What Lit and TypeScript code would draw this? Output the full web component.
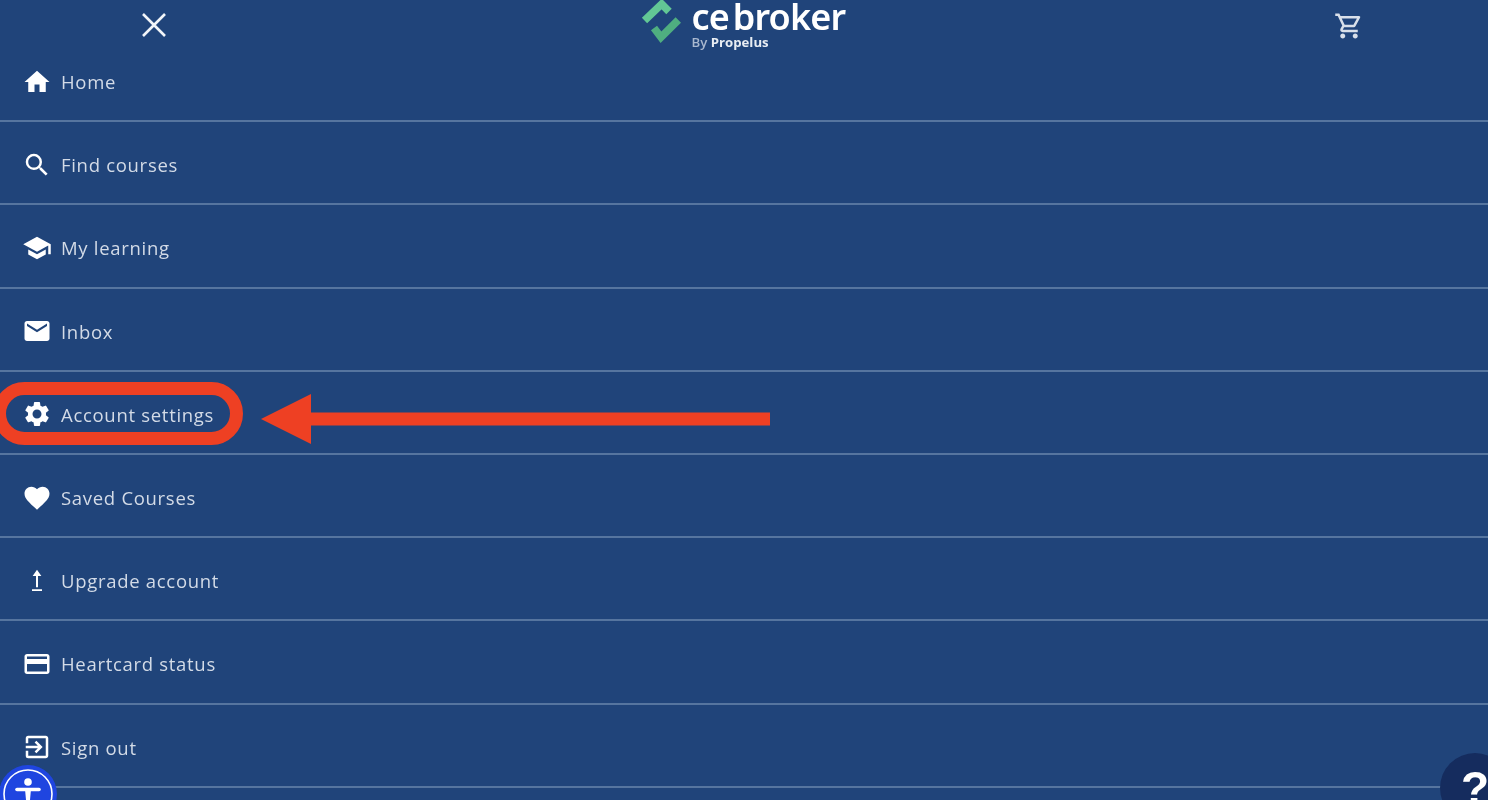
import { LitElement, html, css, svg } from "lit";
import { customElement } from "lit/decorators.js";

const items = [
  { label: "Home", icon: svg`<path d="M10 20v-6h4v6h5v-8h3L12 3 2 12h3v8z"/>` },
  { label: "Find courses", icon: svg`<path d="M15.5 14h-.79l-.28-.27A6.47 6.47 0 0 0 16 9.5 6.5 6.5 0 1 0 9.5 16c1.61 0 3.09-.59 4.23-1.57l.27.28v.79l5 4.99L20.49 19l-4.99-5zm-6 0C7.01 14 5 11.99 5 9.5S7.01 5 9.5 5 14 7.01 14 9.5 11.99 14 9.5 14z"/>` },
  { label: "My learning", icon: svg`<path d="M5 13.18v4L12 21l7-3.82v-4L12 17l-7-3.82zM12 3 1 9l11 6 9-4.91V17h2V9L12 3z"/>` },
  { label: "Inbox", icon: svg`<path d="M20 4H4c-1.1 0-1.99.9-1.99 2L2 18c0 1.1.9 2 2 2h16c1.1 0 2-.9 2-2V6c0-1.1-.9-2-2-2zm0 4-8 5-8-5V6l8 5 8-5v2z"/>` },
  { label: "Account settings", icon: svg`<path d="M19.14 12.94c.04-.3.06-.61.06-.94 0-.32-.02-.64-.07-.94l2.03-1.58a.49.49 0 0 0 .12-.61l-1.92-3.32a.488.488 0 0 0-.59-.22l-2.39.96c-.5-.38-1.03-.7-1.62-.94l-.36-2.54a.484.484 0 0 0-.48-.41h-3.84c-.24 0-.43.17-.47.41l-.36 2.54c-.59.24-1.13.57-1.62.94l-2.39-.96c-.22-.08-.47 0-.59.22L2.74 8.87c-.12.21-.08.47.12.61l2.03 1.58c-.05.3-.09.63-.09.94s.02.64.07.94l-2.03 1.58a.49.49 0 0 0-.12.61l1.92 3.32c.12.22.37.29.59.22l2.39-.96c.5.38 1.03.7 1.62.94l.36 2.54c.05.24.24.41.48.41h3.84c.24 0 .44-.17.47-.41l.36-2.54c.59-.24 1.13-.56 1.62-.94l2.39.96c.22.08.47 0 .59-.22l1.92-3.32c.12-.22.07-.47-.12-.61l-2.01-1.58zM12 15.6c-1.98 0-3.6-1.62-3.6-3.6s1.62-3.6 3.6-3.6 3.6 1.62 3.6 3.6-1.62 3.6-3.6 3.6z"/>` },
  { label: "Saved Courses", icon: svg`<path d="m12 21.35-1.45-1.32C5.4 15.36 2 12.28 2 8.5 2 5.42 4.42 3 7.5 3c1.74 0 3.41.81 4.5 2.09C13.09 3.81 14.76 3 16.5 3 19.58 3 22 5.42 22 8.5c0 3.78-3.4 6.86-8.55 11.54L12 21.35z"/>` },
  { label: "Upgrade account", icon: svg`<path d="M8 20h8v-1.5H8zM12 3 8.5 8h2.7v9h1.6V8h2.7z"/>` },
  { label: "Heartcard status", icon: svg`<path d="M20 4H4c-1.11 0-1.99.89-1.99 2L2 18c0 1.11.89 2 2 2h16c1.11 0 2-.89 2-2V6c0-1.11-.89-2-2-2zm0 14H4v-6h16v6zm0-10H4V6h16v2z"/>` },
  { label: "Sign out", icon: svg`<path d="M10.09 15.59 11.5 17l5-5-5-5-1.41 1.41L12.67 11H3v2h9.67l-2.58 2.59zM19 3H5a2 2 0 0 0-2 2v4h2V5h14v14H5v-4H3v4a2 2 0 0 0 2 2h14c1.1 0 2-.9 2-2V5c0-1.1-.9-2-2-2z"/>` },
];

@customElement("app-root")
export class AppRoot extends LitElement {
  static styles = css`
    :host {
      display: block;
      position: relative;
      width: 1488px;
      height: 800px;
      overflow: hidden;
      background: #20447a;
      font-family: "Open Sans", "Liberation Sans", sans-serif;
    }
    .blur { filter: blur(0.6px); height: 100%; }
    header {
      height: 39px;
      display: grid;
      grid-template-columns: 306px 1fr 280px;
      align-items: center;
    }
    .close { justify-self: center; width: 28px; height: 28px; margin-top: 7px; margin-left: 1px; }
    .cart { justify-self: center; width: 30px; height: 30px; margin-top: 9px; margin-left: 2px; fill: #d9e0ea; }
    .logo {
      justify-self: center;
      align-self: start;
      display: flex;
      gap: 5px;
      margin-left: -28px;
      margin-top: -3px;
      align-items: flex-start;
      height: 46px;
    }
    .mark { width: 46px; height: 46px; flex: none; overflow: visible; }
    .word { display: flex; flex-direction: column; }
    .name {
      font-family: "Noto Sans", "Open Sans", sans-serif;
      font-size: 36px;
      line-height: 36px;
      font-weight: 600;
      letter-spacing: -0.8px;
      word-spacing: -5px;
      color: #fff;
      white-space: nowrap;
      padding-top: 2px;
    }
    .by { font-size: 13.2px; line-height: 14px; color: #a9b8cf; font-weight: 600; white-space: nowrap; }
    .by b { color: #e8edf3; font-weight: 700; }
    ul { list-style: none; margin: 0; padding: 0; }
    li {
      box-sizing: border-box;
      height: 83.2px;
      padding: 4px 0 0 22px;
      border-bottom: 2px solid #56759f;
      display: flex;
      align-items: center;
      gap: 9px;
      color: #d3dbe7;
      font-size: 18.5px;
      letter-spacing: 0.7px;
    }
    li svg { width: 30px; height: 30px; fill: #fff; flex: none; }
    .overlay { position: absolute; left: 0; top: 0; width: 1488px; height: 800px; }
    .a11y {
      position: absolute; left: -1px; top: 765px; width: 58px; height: 58px;
      border-radius: 50%; background: #1f45e0; display: flex; align-items: center; justify-content: center;
    }
    .a11y svg { width: 50px; height: 50px; }
    .help {
      position: absolute; left: 1440px; top: 753px; width: 70px; height: 70px;
      border-radius: 50%; background: #152c5e; color: #fff;
      font-family: "Liberation Sans", sans-serif; font-weight: 700; font-size: 46px; line-height: 70px;
      padding-left: 21px; box-sizing: border-box;
    }
  `;

  render() {
    return html`
      <div class="blur">
        <header>
          <svg class="close" viewBox="0 0 28 28" fill="none" stroke="#f2f5f9" stroke-width="2.6">
            <path d="M3 3l22 22M25 3L3 25"/>
          </svg>
          <div class="logo">
            <svg class="mark" viewBox="0 0 46 46" fill="none" stroke-width="7.6">
              <path d="M3.5 23.5 L20.7 7 L28 14.5" stroke="#62c795"/>
              <path d="M13 31 L20 40.3 L37.3 23" stroke="#4fae80"/>
            </svg>
            <div class="word">
              <div class="name">ce broker</div>
              <div class="by">By <b>Propelus</b></div>
            </div>
          </div>
          <svg class="cart" viewBox="0 0 24 24">
            <path d="M15.55 13c.75 0 1.41-.41 1.75-1.03l3.58-6.49A.996.996 0 0 0 20.01 4H5.21l-.94-2H1v2h2l3.6 7.59-1.35 2.44C4.52 15.37 5.48 17 7 17h12v-2H7l1.1-2h7.45zM6.16 6h12.15l-2.76 5H8.53L6.16 6zM7 18c-1.1 0-1.99.9-1.99 2S5.9 22 7 22s2-.9 2-2-.9-2-2-2zm10 0c-1.1 0-1.99.9-1.99 2s.89 2 1.99 2 2-.9 2-2-.9-2-2-2z"/>
          </svg>
        </header>
        <ul>
          ${items.map(
            (i) => html`<li><svg viewBox="0 0 24 24">${i.icon}</svg><span>${i.label}</span></li>`
          )}
        </ul>
        <div class="a11y">
          <svg viewBox="0 0 50 50" fill="none">
            <circle cx="25" cy="25" r="24" stroke="#fff" stroke-width="1.6"/>
            <circle cx="25" cy="13" r="3.8" fill="#fff"/>
            <path d="M14 20.5h22" stroke="#fff" stroke-width="3.6" stroke-linecap="round"/>
            <path d="M22 20h6l-1 11 3 15h-3.5L25 36l-1.5 10H20l3-15z" fill="#fff"/>
          </svg>
        </div>
        <div class="help">?</div>
      </div>
      <svg class="overlay" viewBox="0 0 1488 800">
        <rect x="-0.5" y="388.5" width="237" height="50" rx="25" fill="none" stroke="#ee4023" stroke-width="13"/>
        <path d="M261 419 L311 394 V412.5 H770 V425.5 H311 V444 Z" fill="#ee4023"/>
      </svg>
    `;
  }
}
